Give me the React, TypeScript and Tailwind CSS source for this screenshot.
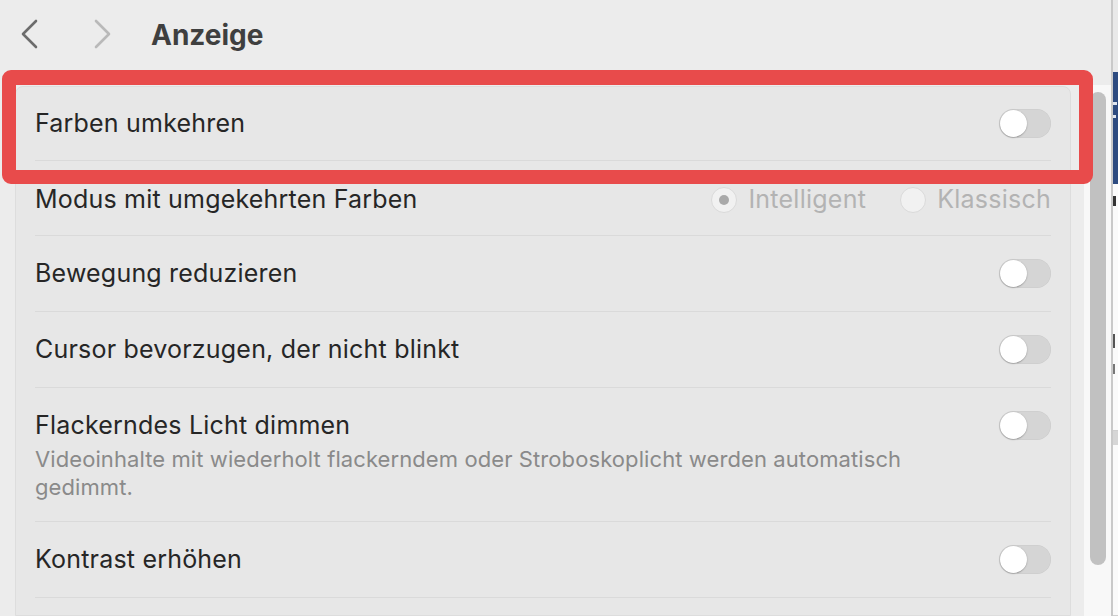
import React from "react";

const font = { fontFamily: "Inter, 'Noto Sans', 'Liberation Sans', sans-serif" };

function Toggle() {
  return (
    <div className="relative h-[29px] w-[52px] shrink-0 rounded-full bg-[#d5d5d5] shadow-[inset_0_0_0_0.5px_rgba(0,0,0,0.06)]">
      <div className="absolute left-[1px] top-[1px] h-[27px] w-[27px] rounded-full bg-white shadow-[0_0.5px_1.5px_rgba(0,0,0,0.35)]" />
    </div>
  );
}

function Radio({ checked, label }: { checked?: boolean; label: string }) {
  return (
    <div className="flex items-center gap-[11px]">
      <div className="flex h-[26px] w-[26px] items-center justify-center rounded-full border border-[#dadada] bg-[#f1f1f1]">
        {checked && <div className="h-[10px] w-[10px] rounded-full bg-[#a9a9a9]" />}
      </div>
      <span className="text-[25px] tracking-[0.25px] text-[#b3b3b3]">{label}</span>
    </div>
  );
}

function Row({ label, h, children, pt }: { label: string; h: string; children?: React.ReactNode; pt?: string }) {
  return (
    <div className={`flex items-center justify-between border-b border-[#dadada] ${h}`}>
      <span className={`text-[25px] tracking-[0.2px] text-[#262626] ${pt ?? ""}`}>{label}</span>
      {children}
    </div>
  );
}

export default function App() {
  return (
    <div className="relative flex h-[616px] w-[1118px] overflow-hidden bg-[#ececec]" style={font}>
      <div className="flex w-[1111px] flex-col">
        <div className="flex h-[85px] shrink-0 items-start pt-[19px]">
          <svg className="ml-[20px]" width="20" height="30" viewBox="0 0 20 30">
            <path d="M16 2 L3 15 L16 28" fill="none" stroke="#6c6c6c" strokeWidth="2.6" strokeLinecap="round" strokeLinejoin="round" />
          </svg>
          <svg className="ml-[53px]" width="20" height="30" viewBox="0 0 20 30">
            <path d="M3 2 L16 15 L3 28" fill="none" stroke="#b9b9b9" strokeWidth="2.6" strokeLinecap="round" strokeLinejoin="round" />
          </svg>
          <span className="ml-[38px] mt-[-5px] text-[28px] font-bold text-[#3f3f3f]">Anzeige</span>
        </div>
        <div className="flex min-h-0 flex-1">
          <div className="ml-[15px] mt-[1px] w-[1056px] shrink-0 rounded-t-[8px] border border-[#dddddd] bg-[#e7e7e7] pl-[19px] pr-[19px]">
            <Row label="Farben umkehren" h="h-[74px]">
              <Toggle />
            </Row>
            <Row label="Modus mit umgekehrten Farben" h="h-[75px]" pt="pt-[3px]">
              <div className="flex items-center gap-[34px] pt-[3px]">
                <Radio checked label="Intelligent" />
                <Radio label="Klassisch" />
              </div>
            </Row>
            <Row label="Bewegung reduzieren" h="h-[76px]">
              <Toggle />
            </Row>
            <Row label="Cursor bevorzugen, der nicht blinkt" h="h-[76px]">
              <Toggle />
            </Row>
            <div className="flex h-[134px] items-start justify-between border-b border-[#dadada] pt-[23px]">
              <div className="flex flex-col">
                <span className="text-[25px] leading-[28px] tracking-[0.2px] text-[#262626]">Flackerndes Licht dimmen</span>
                <span className="mt-[6px] text-[22px] leading-[28px] tracking-[0.09px] text-[#8a8a8a]">
                  Videoinhalte mit wiederholt flackerndem oder Stroboskoplicht werden automatisch
                  <br />
                  gedimmt.
                </span>
              </div>
              <Toggle />
            </div>
            <Row label="Kontrast erhöhen" h="h-[76px]">
              <Toggle />
            </Row>
            <div className="h-[76px]" />
          </div>
          <div className="ml-[13px] flex w-[27px] shrink-0 justify-center bg-[#f8f8f8] pt-[7px]">
            <div className="h-[473px] w-[16px] rounded-full bg-[#c1c1c1]" />
          </div>
        </div>
      </div>
      <div className="flex w-[7px] flex-col border-l-2 border-[#c9c9c9]">
        <div className="h-[78px] bg-[#e9e9e9]" />
        <div className="flex h-[119px] flex-col bg-[#2d4b80] pt-[30px]">
          <div className="h-[3px] w-[4px] bg-[#dfe5ef]" />
          <div className="mt-[10px] h-[3px] w-[3px] bg-[#dfe5ef]" />
        </div>
        <div className="flex flex-1 flex-col bg-[#fafafa] pt-[12px]">
          <div className="h-[10px] w-[3px] bg-[#333]" />
          <div className="mt-[128px] h-[14px] w-[2px] bg-[#555]" />
          <div className="mt-[16px] h-[10px] w-[2px] bg-[#777]" />
          <div className="mt-[56px] h-[1px] w-full bg-[#cfcfcf]" />
          <div className="h-[14px] w-full bg-[#d6d6d6]" />
          <div className="mt-[170px] h-[1px] w-full bg-[#cfcfcf]" />
        </div>
      </div>
      <div className="pointer-events-none absolute left-[2px] top-[70px] h-[114px] w-[1091px] rounded-[9px] border-[14px] border-t-[15px] border-[#e84b4b]" />
    </div>
  );
}
